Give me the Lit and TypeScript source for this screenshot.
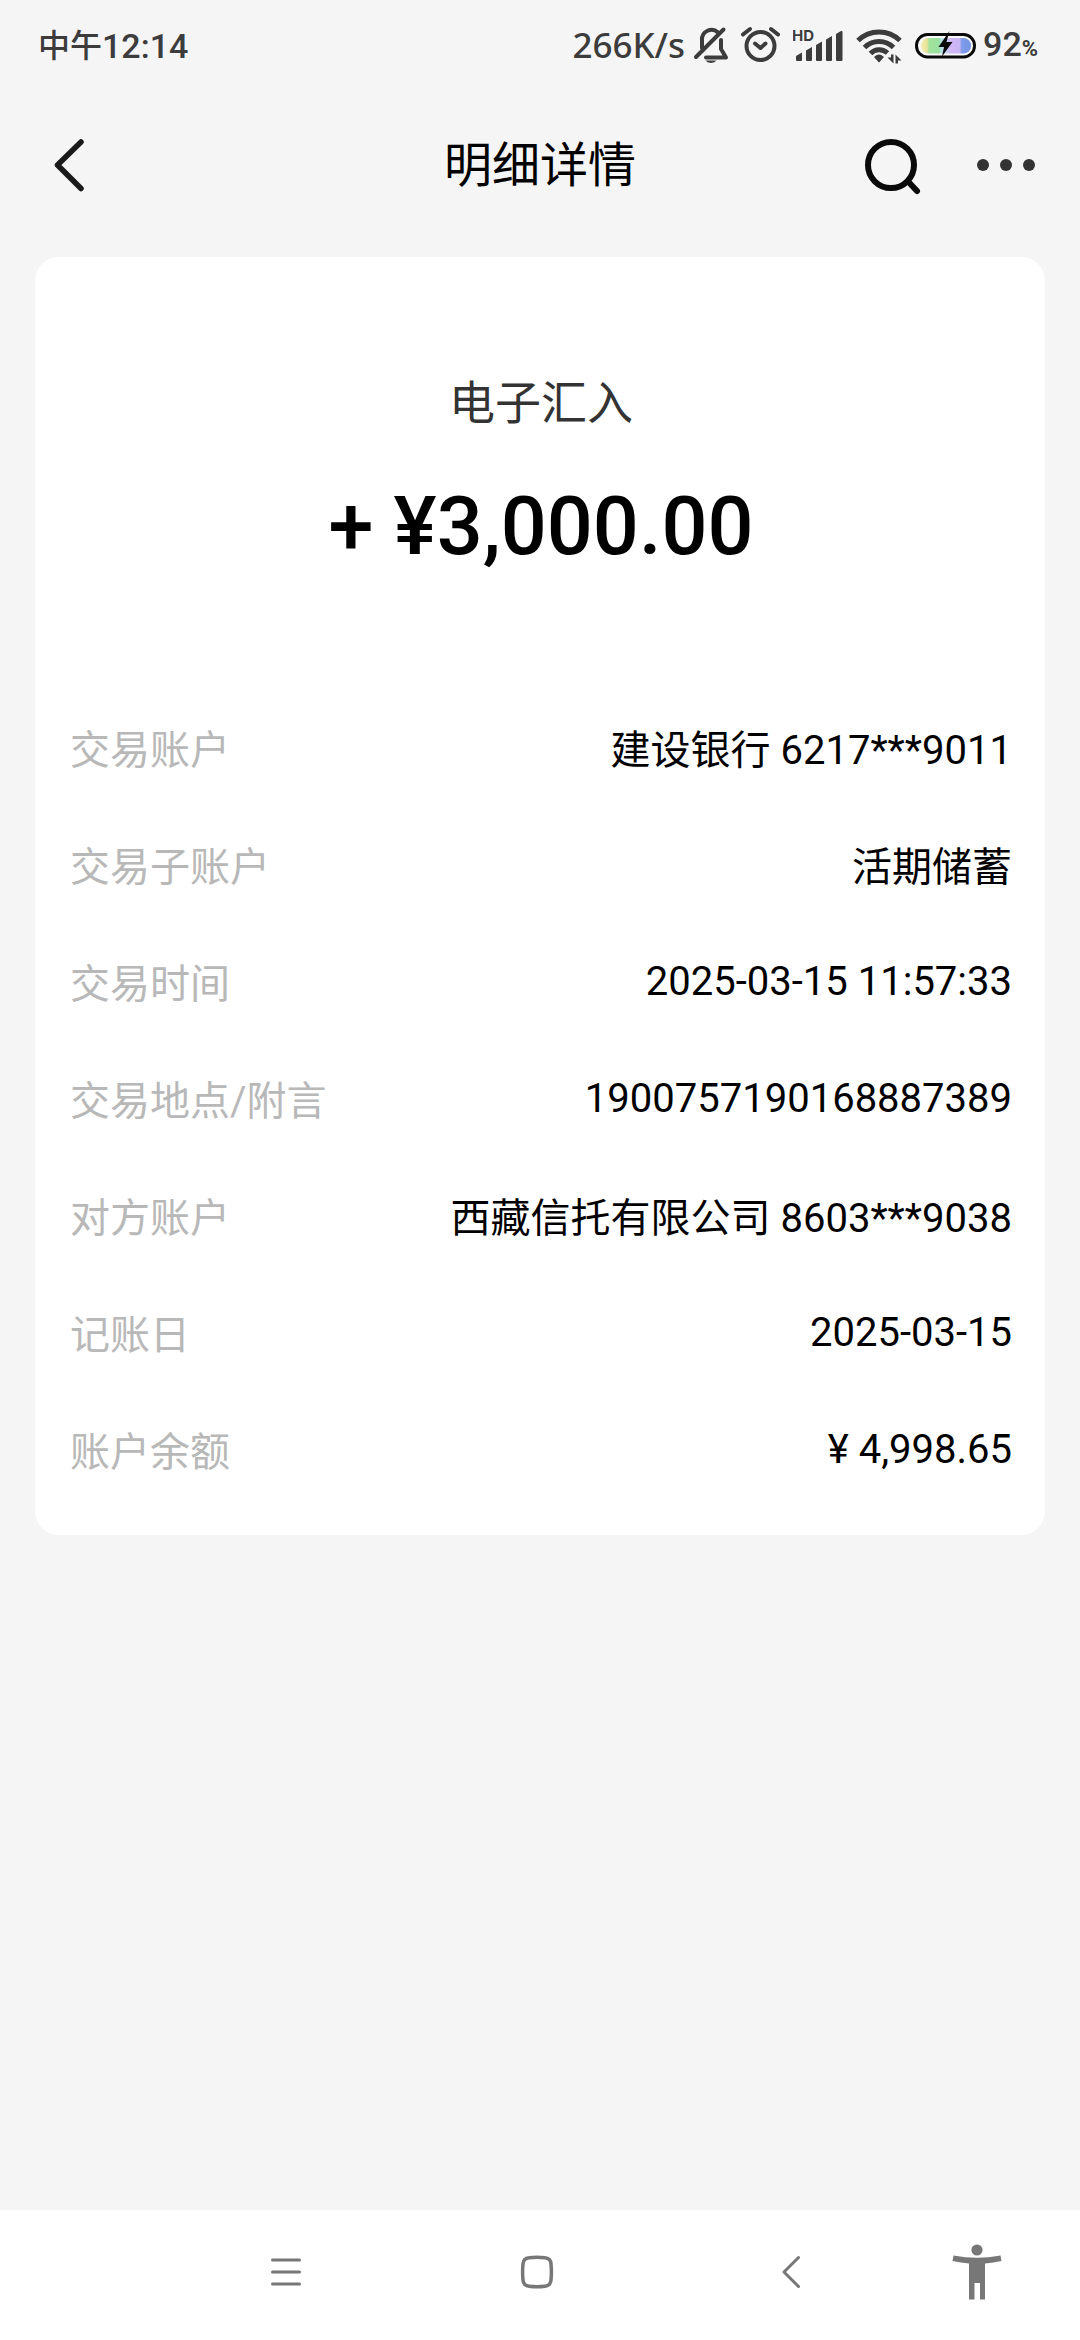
import { LitElement, html, css } from "lit";
import { customElement, property } from "lit/decorators.js";

interface Detail {
  label: string;
  value: string;
}

const details: Detail[] = [
  { label: "交易账户", value: "建设银行 6217***9011" },
  { label: "交易子账户", value: "活期储蓄" },
  { label: "交易时间", value: "2025-03-15 11:57:33" },
  { label: "交易地点/附言", value: "1900757190168887389" },
  { label: "对方账户", value: "西藏信托有限公司 8603***9038" },
  { label: "记账日", value: "2025-03-15" },
  { label: "账户余额", value: "¥ 4,998.65" },
];

@customElement("status-bar")
class StatusBar extends LitElement {
  static styles = css`
    :host {
      display: flex;
      align-items: center;
      justify-content: space-between;
      height: 90px;
      padding: 0 42px 0 38px;
      color: #3c3c3c;
      font-size: 34px;
      font-weight: 500;
      line-height: 40px;
    }
    .time {
      display: flex;
      align-items: center;
      padding-top: 2px;
    }
    .period {
      font-size: 32px;
    }
    .icons {
      display: flex;
      align-items: center;
      gap: 12px;
    }
    .speed {
      font-family: "Noto Sans", sans-serif;
      font-size: 35px;
      margin-right: -4px;
    }
    .battery {
      display: flex;
      align-items: center;
      gap: 6px;
    }
    .level {
      padding-top: 2px;
    }
    .percent {
      font-size: 22px;
      font-weight: 700;
    }
    svg {
      display: block;
    }
  `;

  render() {
    return html`
      <div class="time"><span class="period">中午</span><span>12:14</span></div>
      <div class="icons">
        <span class="speed">266K/s</span>
        <svg width="36" height="40" viewBox="690 25 36 40" fill="none" stroke="#3c3c3c" stroke-width="4" stroke-linecap="round" aria-hidden="true">
          <path d="M699 48V40a9.500 9.500 0 0 1 16-7.500M718 40v9l5 8.500H703" stroke-linejoin="round" />
          <path d="M720.500 29.500L693 57" />
          <path d="M702.500 60.500h11a6 4 0 0 1-11 0z" fill="#3c3c3c" stroke="none" />
        </svg>
        <svg width="40" height="40" viewBox="740 25 40 40" fill="none" stroke="#3c3c3c" stroke-width="4" stroke-linecap="round" stroke-linejoin="round" aria-hidden="true">
          <circle cx="759.500" cy="46" r="14" />
          <path d="M754 43.500l5.500 4.500 5-4.500" />
          <path d="M742 34.500l7-5.500M777 34.500l-7-5.500" />
        </svg>
        <svg width="51" height="40" viewBox="790 25 51 40" fill="#3c3c3c" aria-hidden="true">
          <text x="789" y="41" font-family="Inter, sans-serif" font-size="15" font-weight="700">HD</text>
          <path d="M793 56l6-3.500V60q0 1-1 1h-4q-1 0-1-1zM803 50.500l6-3.500V60q0 1-1 1h-4q-1 0-1-1zM813 45l6-3.500V60q0 1-1 1h-4q-1 0-1-1zM823 39.500l6-3.500V60q0 1-1 1h-4q-1 0-1-1zM833 34l5-3q1.500-.5 1.500 1V60q0 1-1 1h-4.500q-1 0-1-1z" />
        </svg>
        <svg width="47" height="40" viewBox="853 25 47 40" fill="none" stroke="#3c3c3c" stroke-width="5" aria-hidden="true">
          <path d="M855 40.500a30 30 0 0 1 42 0M861.500 47.500a20.500 20.500 0 0 1 29 0M867.500 53.500a12 12 0 0 1 17-.5" />
          <path d="M872 57q4-3.500 8 0l-4 4.500z" fill="#3c3c3c" stroke-width="1.500" stroke-linejoin="round" />
          <path d="M890.500 54.500v9l-6-6h3.500v-3zM892.500 63.500v-9l6 6h-3.500v3z" fill="#3c3c3c" stroke="none" />
        </svg>
        <span class="battery">
          <svg width="62" height="40" viewBox="912 25 62 40" aria-hidden="true">
            <defs>
              <linearGradient id="charge">
                <stop offset="0" stop-color="#f6efb0" />
                <stop offset=".12" stop-color="#e9e29a" />
                <stop offset=".16" stop-color="#a4e49c" />
                <stop offset=".36" stop-color="#98dfa0" />
                <stop offset=".42" stop-color="#b9e4f2" />
                <stop offset=".54" stop-color="#c9c8f4" />
                <stop offset=".6" stop-color="#d2b6f6" />
                <stop offset=".77" stop-color="#c8b6f4" />
                <stop offset=".82" stop-color="#7d9be8" />
                <stop offset="1" stop-color="#7493e4" />
              </linearGradient>
            </defs>
            <rect x="913.500" y="34.500" width="58" height="22.500" rx="11" fill="#f9f9f9" stroke="#0a0a0a" stroke-width="3" />
            <rect x="918" y="38" width="50" height="15.500" rx="7.500" fill="url(#charge)" />
            <path d="M946.500 31L935.500 47h5.500l-2 9.500L949.500 42H943.500z" fill="#0a0a0a" />
          </svg>
          <span class="level">92<span class="percent">%</span></span>
        </span>
      </div>
    `;
  }
}

@customElement("page-header")
class PageHeader extends LitElement {
  @property() heading = "";

  static styles = css`
    :host {
      display: grid;
      grid-template-columns: 1fr auto 1fr;
      align-items: center;
      height: 150px;
      padding: 0 36px;
    }
    .title {
      margin: 0;
      padding-top: 2px;
      font-size: 48px;
      font-weight: 400;
      line-height: 60px;
      color: #000;
    }
    .actions {
      display: flex;
      justify-content: flex-end;
      gap: 42px;
    }
    button {
      display: block;
      padding: 0;
      border: 0;
      background: none;
    }
    .back {
      justify-self: start;
    }
    svg {
      display: block;
    }
  `;

  render() {
    return html`
      <button class="back" aria-label="返回">
        <svg width="66" height="66" viewBox="36 132 66 66" fill="none" stroke="#1a1a1a" stroke-width="5.500" stroke-linecap="round" stroke-linejoin="round">
          <path d="M81 142L57.500 165 81 188.500" />
        </svg>
      </button>
      <h1 class="title">${this.heading}</h1>
      <div class="actions">
        <button aria-label="搜索">
          <svg width="66" height="66" viewBox="860 132 66 66" fill="none" stroke="#0a0a0a" stroke-width="6" stroke-linecap="round">
            <circle cx="891" cy="165" r="23" />
            <path d="M909.500 183l7.500 8" />
          </svg>
        </button>
        <button aria-label="更多">
          <svg width="76" height="66" viewBox="968 132 76 66" fill="#333">
            <circle cx="983" cy="165" r="6" />
            <circle cx="1006" cy="165" r="6" />
            <circle cx="1029" cy="165" r="6" />
          </svg>
        </button>
      </div>
    `;
  }
}

@customElement("detail-card")
class DetailCard extends LitElement {
  @property() kind = "";
  @property() amount = "";
  @property({ attribute: false }) items: Detail[] = [];

  static styles = css`
    :host {
      display: block;
      margin: 0 35px;
      padding: 114px 33px 57px 35px;
      border-radius: 24px;
      background: #fff;
    }
    .summary {
      display: flex;
      flex-direction: column;
      align-items: center;
      gap: 18px;
      margin-bottom: 117px;
    }
    .kind {
      margin: 0;
      font-size: 46px;
      line-height: 64px;
      color: #333;
    }
    .amount {
      margin: 0;
      font-size: 81px;
      font-weight: 500;
      line-height: 148px;
      color: #000;
    }
    .rows {
      display: flex;
      flex-direction: column;
      gap: 59px;
      margin: 0;
      font-size: 40px;
    }
    .row {
      display: flex;
      align-items: center;
      justify-content: space-between;
      gap: 24px;
    }
    .label {
      color: #b8b8b8;
    }
    .value {
      margin: 0;
      color: #000;
      text-align: right;
    }
  `;

  render() {
    return html`
      <div class="summary">
        <p class="kind">${this.kind}</p>
        <p class="amount">${this.amount}</p>
      </div>
      <dl class="rows">
        ${this.items.map(
          (item) => html`
            <div class="row">
              <dt class="label">${item.label}</dt>
              <dd class="value">${item.value}</dd>
            </div>
          `,
        )}
      </dl>
    `;
  }
}

@customElement("system-nav")
class SystemNav extends LitElement {
  static styles = css`
    :host {
      display: grid;
      grid-template-columns: 160fr 252fr 250fr 259fr 112fr 47fr;
      height: 130px;
      background: #fff;
    }
    button {
      display: flex;
      align-items: center;
      justify-content: center;
      padding: 0 0 6px;
      border: 0;
      background: none;
    }
    .menu {
      grid-column: 2;
    }
  `;

  render() {
    return html`
      <button class="menu" aria-label="最近任务">
        <svg width="60" height="60" viewBox="256 2242 60 60" stroke="#777" stroke-width="3" stroke-linecap="round">
          <path d="M272.500 2260h27M272.500 2272h27M272.500 2284h27" />
        </svg>
      </button>
      <button aria-label="主屏幕">
        <svg width="60" height="60" viewBox="507 2242 60 60" fill="none" stroke="#777" stroke-width="3.500">
          <path d="M529 2257.800q8-1 16 0q5.500 .5 6 6q.8 8.200 0 16.400q-.5 5.500-6 6q-8 1-16 0q-5.500-.5-6-6q-.8-8.200 0-16.400q.5-5.500 6-6z" />
        </svg>
      </button>
      <button aria-label="返回上一级">
        <svg width="60" height="60" viewBox="762 2242 60 60" fill="none" stroke="#777" stroke-width="3" stroke-linecap="round" stroke-linejoin="round">
          <path d="M798.500 2257.500L784 2272l14.500 14.500" />
        </svg>
      </button>
      <button aria-label="无障碍">
        <svg width="60" height="60" viewBox="947 2242 60 60" fill="#777">
          <circle cx="977" cy="2250" r="5.600" />
          <path d="M953.500 2255.500q23.500 4.500 47 0l1 5.500q-8 1.800-16.500 2.500v36h-5v-16.500h-5.500v16.500H969v-36q-8.500-.7-16.500-2.500z" />
        </svg>
      </button>
    `;
  }
}

@customElement("app-root")
class AppRoot extends LitElement {
  static styles = css`
    :host {
      display: flex;
      flex-direction: column;
      min-height: 100vh;
      background: #f5f5f5;
      font-family: Roboto, "Noto Sans CJK SC", sans-serif;
    }
    .content {
      flex: 1;
      padding: 17px 0;
    }
  `;

  render() {
    return html`
      <status-bar></status-bar>
      <page-header heading="明细详情"></page-header>
      <main class="content">
        <detail-card kind="电子汇入" amount="+ ¥3,000.00" .items=${details}></detail-card>
      </main>
      <system-nav></system-nav>
    `;
  }
}
